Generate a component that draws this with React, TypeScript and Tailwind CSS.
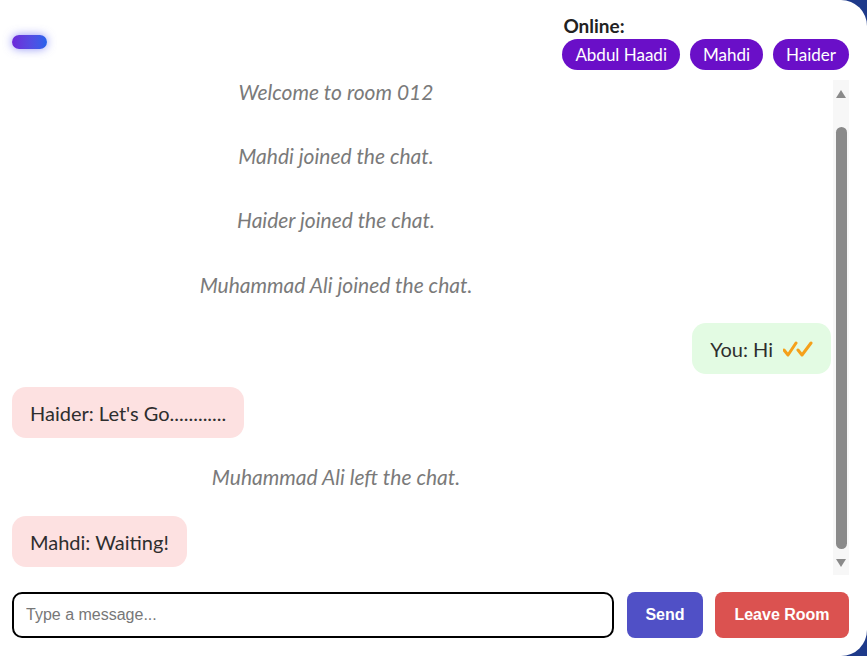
import React from 'react';

type Msg =
    | { kind: 'system'; text: string }
    | { kind: 'mine'; text: string }
    | { kind: 'other'; text: string };

const messages: Msg[] = [
    { kind: 'system', text: 'Welcome to room 012' },
    { kind: 'system', text: 'Mahdi joined the chat.' },
    { kind: 'system', text: 'Haider joined the chat.' },
    { kind: 'system', text: 'Muhammad Ali joined the chat.' },
    { kind: 'mine', text: 'You: Hi' },
    { kind: 'other', text: "Haider: Let's Go............" },
    { kind: 'system', text: 'Muhammad Ali left the chat.' },
    { kind: 'other', text: 'Mahdi: Waiting!' },
];

const online = ['Abdul Haadi', 'Mahdi', 'Haider'];

function Bubble({ msg }: { msg: Msg }) {
    if (msg.kind === 'system') {
        return (
            <div className="shrink-0 w-[648px] h-[51px] flex items-center justify-center text-[21px] italic text-[#7a7a7a]">
                {msg.text}
            </div>
        );
    }
    if (msg.kind === 'mine') {
        return (
            <div className="shrink-0 self-end h-[51px] flex items-center gap-[10px] px-[18px] rounded-[14px] bg-[#e3fbe3] text-[20px] text-[#2e2e2e]">
                <span>{msg.text}</span>
                <span className="flex text-[#f5a01a]">
                    <svg width="30" height="16" viewBox="0 0 30 16">
                        <path d="M1 9 L5 14 L13 2" fill="none" stroke="currentColor" strokeWidth="3" strokeLinecap="round" strokeLinejoin="round" />
                        <path d="M15 9 L19 14 L28 2" fill="none" stroke="currentColor" strokeWidth="3" strokeLinecap="round" strokeLinejoin="round" />
                    </svg>
                </span>
            </div>
        );
    }
    return (
        <div className="shrink-0 self-start h-[51px] flex items-center px-[18px] rounded-[14px] bg-[#fde1e1] text-[20px] text-[#2e2e2e]">
            {msg.text}
        </div>
    );
}

export default function App() {
    return (
        <div className="w-[867px] h-[656px] bg-[#1e3a8a] overflow-hidden">
            <div className="h-full bg-white rounded-r-[26px] flex flex-col pt-[13px] pl-3 pr-[18px] pb-[18px] font-['Lato',sans-serif]">
                {/* header */}
                <div className="h-[58px] flex items-center justify-between">
                    <div className="w-[35px] h-[14px] rounded-full bg-gradient-to-r from-[#6d28d9] to-[#2563eb] shadow-[0_0_10px_rgba(99,102,241,0.7)]" />
                    <div className="flex flex-col">
                        <div className="text-[19px] font-bold text-[#222] leading-[24px] ml-[1px]">Online:</div>
                        <div className="flex gap-[10px] mt-[1px]">
                            {online.map((name) => (
                                <span
                                    key={name}
                                    className="h-[31px] px-[13px] rounded-full bg-[#6a0fc8] text-white text-[17px] flex items-center"
                                >
                                    {name}
                                </span>
                            ))}
                        </div>
                    </div>
                </div>

                {/* messages */}
                <div className="mt-[9px] flex-1 flex gap-[2px] min-h-0">
                    <div className="flex-1 overflow-hidden flex flex-col justify-end gap-[13.3px] pb-[8px]">
                        {messages.map((m, i) => (
                            <Bubble key={i} msg={m} />
                        ))}
                    </div>
                    <div className="w-[16px] bg-[#f7f7f7] flex flex-col items-center">
                        <svg width="12" height="10" viewBox="0 0 12 10" className="mt-[9px]">
                            <polygon points="6,1 11,9 1,9" fill="#8a8a8a" />
                        </svg>
                        <div className="mt-[28px] h-[422px] w-[11px] rounded-full bg-[#8a8a8a]" />
                        <svg width="12" height="10" viewBox="0 0 12 10" className="mt-[9px]">
                            <polygon points="1,1 11,1 6,9" fill="#8a8a8a" />
                        </svg>
                    </div>
                </div>

                {/* input row */}
                <div className="mt-[17px] h-[46px] flex gap-[13px]">
                    <input
                        autoFocus
                        placeholder="Type a message..."
                        className="flex-1 h-full border-2 border-black rounded-[10px] px-[12px] text-[16px] font-['Liberation_Sans',Arial,sans-serif] placeholder:text-[#777] outline-none"
                    />
                    <button className="w-[76px] h-full rounded-[8px] bg-[#5050c6] text-white font-bold text-[16px] font-['Liberation_Sans',Arial,sans-serif]">
                        Send
                    </button>
                    <button className="w-[134px] h-full rounded-[8px] bg-[#db5250] text-white font-bold text-[16px] font-['Liberation_Sans',Arial,sans-serif] ml-[-1px]">
                        Leave Room
                    </button>
                </div>
            </div>
        </div>
    );
}
